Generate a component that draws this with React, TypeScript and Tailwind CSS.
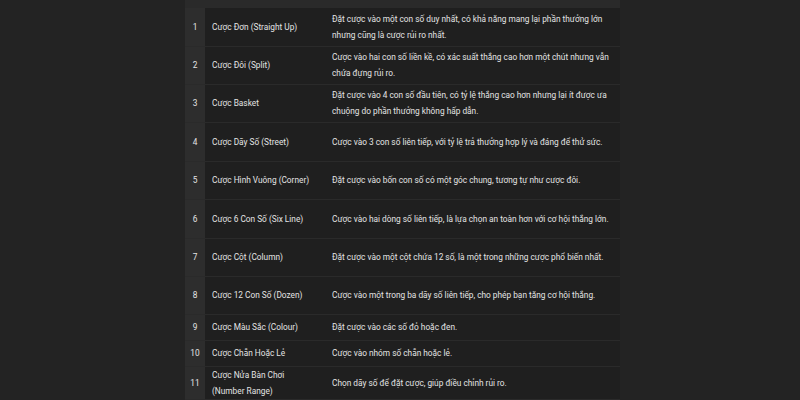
import type { FC } from 'react';

interface BetRow {
  no: number;
  name: string;
  desc: string;
  h: string;
}

const ROWS: BetRow[] = [
  { no: 1, name: 'Cược Đơn (Straight Up)', desc: 'Đặt cược vào một con số duy nhất, có khả năng mang lại phần thưởng lớn nhưng cũng là cược rủi ro nhất.', h: 'h-[38px]' },
  { no: 2, name: 'Cược Đôi (Split)', desc: 'Cược vào hai con số liền kề, có xác suất thắng cao hơn một chút nhưng vẫn chứa đựng rủi ro.', h: 'h-[38px]' },
  { no: 3, name: 'Cược Basket', desc: 'Đặt cược vào 4 con số đầu tiên, có tỷ lệ thắng cao hơn nhưng lại ít được ưa chuộng do phần thưởng không hấp dẫn.', h: 'h-[38px]' },
  { no: 4, name: 'Cược Dãy Số (Street)', desc: 'Cược vào 3 con số liên tiếp, với tỷ lệ trả thưởng hợp lý và đáng để thử sức.', h: 'h-[39px]' },
  { no: 5, name: 'Cược Hình Vuông (Corner)', desc: 'Đặt cược vào bốn con số có một góc chung, tương tự như cược đôi.', h: 'h-[38px]' },
  { no: 6, name: 'Cược 6 Con Số (Six Line)', desc: 'Cược vào hai dòng số liên tiếp, là lựa chọn an toàn hơn với cơ hội thắng lớn.', h: 'h-[39px]' },
  { no: 7, name: 'Cược Cột (Column)', desc: 'Đặt cược vào một cột chứa 12 số, là một trong những cược phổ biến nhất.', h: 'h-[38px]' },
  { no: 8, name: 'Cược 12 Con Số (Dozen)', desc: 'Cược vào một trong ba dãy số liên tiếp, cho phép bạn tăng cơ hội thắng.', h: 'h-[38px]' },
  { no: 9, name: 'Cược Màu Sắc (Colour)', desc: 'Đặt cược vào các số đỏ hoặc đen.', h: 'h-[26px]' },
  { no: 10, name: 'Cược Chẵn Hoặc Lẻ', desc: 'Cược vào nhóm số chẵn hoặc lẻ.', h: 'h-[26px]' },
  { no: 11, name: 'Cược Nửa Bàn Chơi (Number Range)', desc: 'Chọn dãy số để đặt cược, giúp điều chỉnh rủi ro.', h: 'h-[31px]' },
];

const App: FC = () => {
  return (
    <div className="w-[800px] h-[400px] bg-[#232323] overflow-hidden font-['Roboto',sans-serif] text-[8.3px] leading-[16px] text-[#e4e4e4]">
      <div className="ml-[185px] w-[435px]">
        <div className="h-[8px] bg-[#2a2a2a]" />
        <table className="w-full table-fixed border-collapse">
          <colgroup>
            <col className="w-[20px]" />
            <col className="w-[117px]" />
            <col className="w-[298px]" />
          </colgroup>
          <tbody>
            {ROWS.map((row) => (
              <tr key={row.no} className={`${row.h} border-b border-[#2a2a2a]`}>
                <td className="bg-[#2d2d2d] text-center align-middle">{row.no}</td>
                <td className="bg-[#1f1f1f] pl-[7px] pr-[8px] align-middle">{row.name}</td>
                <td className="bg-[#1f1f1f] pl-[10px] pr-[3px] align-middle">{row.desc}</td>
              </tr>
            ))}
          </tbody>
        </table>
      </div>
    </div>
  );
};

export default App;
